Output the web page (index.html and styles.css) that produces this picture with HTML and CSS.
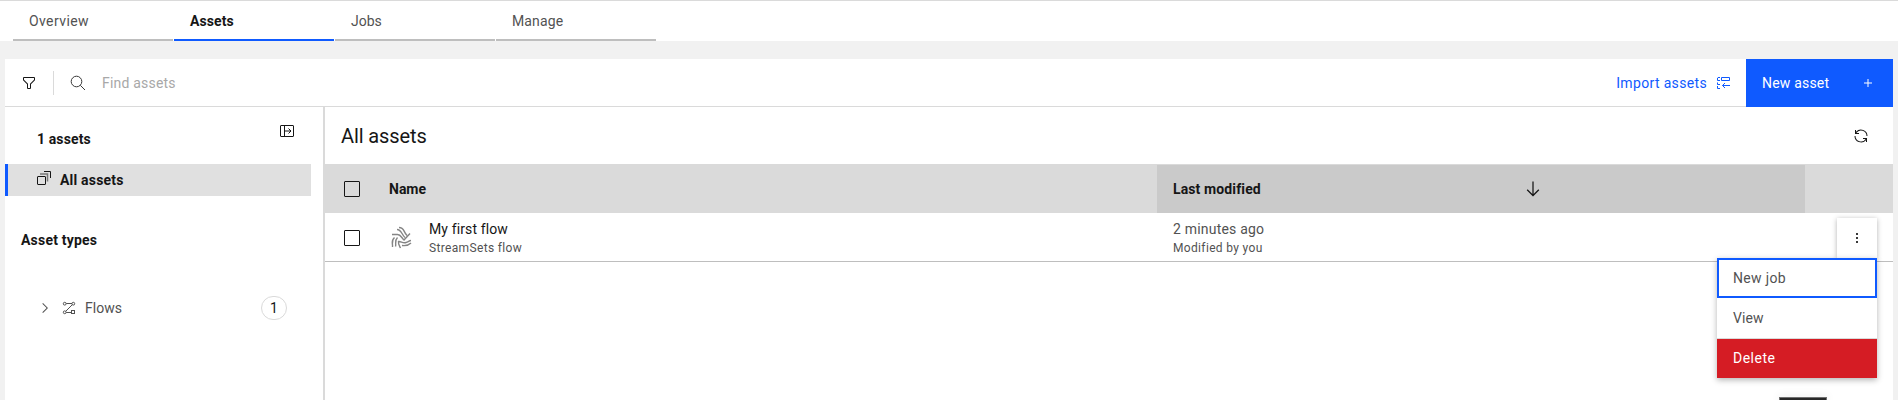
FILE: index.html
```html
<!DOCTYPE html>
<html lang="en">
<head>
<meta charset="utf-8">
<title>Assets</title>
<link rel="stylesheet" href="styles.css">
</head>
<body>
<nav class="tabs">
  <a class="tab ls-4">Overview</a>
  <a class="tab tab-active">Assets</a>
  <a class="tab">Jobs</a>
  <a class="tab ls-1">Manage</a>
</nav>
<main class="panel">
  <header class="toolbar">
    <div class="filter"><svg width="16" height="16" viewBox="0 0 32 32"><path d="M18 28h-4a2 2 0 0 1-2-2v-7.59L4.59 11A2 2 0 0 1 4 9.59V6a2 2 0 0 1 2-2h20a2 2 0 0 1 2 2v3.59a2 2 0 0 1-.59 1.41L20 18.41V26a2 2 0 0 1-2 2ZM6 6v3.59l8 8V26h4v-8.41l8-8V6Z"/></svg></div>
    <div class="search">
      <svg width="16" height="16" viewBox="0 0 16 16" fill="none" stroke="currentColor"><circle cx="6.500" cy="6.500" r="5.300"/><path d="M10.300 10.300L15 15"/></svg>
      <span class="placeholder ls-2">Find assets</span>
    </div>
    <div class="import"><span class="ls-3">Import assets</span>
      <svg width="16" height="16" viewBox="0 0 16 16" fill="none" stroke="currentColor"><path d="M5 2.500H3L2.500 3V5.500H5M6.500 2.500H14.500V5.500H6.500ZM2.500 7.500V9.500H5M5 13.500H2.500V11M15 10.500H7.500M10 8L7.500 10.500L10 13"/></svg>
    </div>
    <div class="new-asset"><span class="ls-2">New asset</span>
      <svg width="16" height="16" viewBox="0 0 32 32"><path d="M17 15V8h-2v7H8v2h7v7h2v-7h7v-2z"/></svg>
    </div>
  </header>
  <div class="body">
    <aside class="side">
      <div class="side-head"><span class="ls-1">1 assets</span>
        <svg class="open-icon" width="16" height="16" viewBox="0 0 16 16" fill="none" stroke="currentColor"><rect x="1.500" y="2.500" width="13" height="11" rx=".5"/><path d="M5.500 2.500V13.500M6 8H12M9.500 5.500L12 8L9.500 10.500"/></svg>
      </div>
      <div class="nav-item"><svg width="16" height="16" viewBox="0 0 16 16" fill="none" stroke="currentColor"><rect x="1.500" y="6.500" width="8" height="8" rx=".5"/><path stroke="#777" stroke-width="1.500" d="M4 4H11.500V11.500"/><path d="M8 1.500H14.500V8"/></svg><span class="ls-2">All assets</span></div>
      <div class="side-title ls-2">Asset types</div>
      <div class="type-row">
        <svg width="16" height="16" viewBox="0 0 32 32"><path d="M22 16L12 26 10.600 24.600 19.200 16 10.600 7.400 12 6z"/></svg>
        <svg class="flow-icon" width="16" height="16" viewBox="0 0 16 16" fill="none" stroke="currentColor"><circle cx="3.700" cy="3.700" r="1.400"/><circle cx="12.300" cy="3.700" r="1.400"/><circle cx="3.700" cy="12.300" r="1.400"/><rect x="10.500" y="10.500" width="3" height="3"/><path d="M5.200 3.500H11M11.300 4.700L4.700 11.300M5.200 12.500H10.500"/></svg>
        <span class="type-name">Flows</span>
        <span class="badge">1</span>
      </div>
    </aside>
    <section class="content">
      <div class="content-head"><h1>All assets</h1>
        <svg width="16" height="16" viewBox="0 0 32 32"><path d="M12 10H6.780A11 11 0 0 1 27 16h2A13 13 0 0 0 6 7.680V4H4v8h8zM20 22h5.220A11 11 0 0 1 5 16H3a13 13 0 0 0 23 8.320V28h2V20H20z"/></svg>
      </div>
      <div class="grid thead">
        <div class="check-cell"><span class="check"></span></div>
        <div class="head-cell">Name</div>
        <div class="head-cell sorted"><span class="ls-1">Last modified</span><svg width="20" height="20" viewBox="0 0 32 32"><path d="M24.590 16.590 17 24.170 17 4 15 4 15 24.170 7.410 16.590 6 18 16 28 26 18z"/></svg></div>
        <div></div>
      </div>
      <div class="grid row">
        <div class="check-cell"><span class="check"></span></div>
        <div class="name-cell">
          <svg width="24" height="24" viewBox="0 0 24 24" fill="none" stroke="#858585" stroke-width="1.400"><path d="M8 3.500C12.500 3.500 12.500 8.500 16 11.500M10 1.500C15.500 1.500 14 5.500 18 9.500M3 8.500H8.500C12 8.500 12.500 12 15 14L21 7.500M5.500 11.500C1.500 15 4 17.500 3.500 21M8.500 11.500C5 15 7.500 17.500 6.500 20.500M11.500 22C10 19 9 17.500 9.500 15.500C12 15 13.500 17.500 17 16.500C19.500 16 20 14.500 22 14.500M13 19.500C17 20 20 19 22 17"/></svg>
          <div><div class="primary dark ls-1">My first flow</div><div class="secondary ls-3">StreamSets flow</div></div>
        </div>
        <div class="date-cell"><div class="primary ls-2">2 minutes ago</div><div class="secondary ls-3">Modified by you</div></div>
        <div class="overflow"><svg width="16" height="16" viewBox="0 0 16 16"><path d="M7 3h2v2H7zM7 7h2v2H7zM7 11h2v2H7z"/></svg>
          <div class="menu">
            <div class="menu-item focused ls-3">New job</div>
            <div class="menu-item ls-1">View</div>
            <div class="menu-item danger ls-5">Delete</div>
          </div>
        </div>
      </div>
    </section>
  </div>
</main>
<div class="dock"></div>
</body>
</html>
```
FILE: styles.css
```css
* { box-sizing: border-box; }
body {
  margin: 0; height: 400px; overflow: hidden; position: relative;
  background: #f1f1f1; color: #161616;
  font: 14px/18px Roboto, "Liberation Sans", sans-serif;
}
svg { display: block; flex: none; fill: currentColor; }
svg[fill="none"] { fill: none; }
.ls-1 { letter-spacing: .12px; }
.ls-2 { letter-spacing: .2px; }
.ls-3 { letter-spacing: .34px; }
.ls-4 { letter-spacing: .4px; }
.ls-5 { letter-spacing: .5px; }

.tabs { height: 41px; display: flex; gap: 1px; padding-left: 13px; background: #fff; border-top: 1px solid #dadada; }
.tab { width: 160px; height: 40px; padding: 11px 15px 0 16px; border-bottom: 2px solid #bebebe; color: #525252; }
.tab-active { border-color: #0f5aff; color: #161616; font-weight: 700; letter-spacing: .1px; }

.panel { margin: 18px 5px 0; height: 341px; background: #fff; display: flex; flex-direction: column; }
.toolbar { height: 48px; display: flex; flex: none; border-bottom: 1px solid #dadada; }
.filter { width: 49px; display: flex; align-items: center; padding-left: 16px; position: relative; }
.filter::after { content: ""; position: absolute; right: 0; top: 12px; width: 1px; height: 24px; background: #dadada; }
.search { flex: 1; display: flex; align-items: center; gap: 16px; padding-left: 16px; color: #393939; }
.placeholder { color: #a8a8a8; }
.import { display: flex; align-items: center; gap: 8px; color: #0f5aff; padding-right: 15px; }
.new-asset { width: 147px; height: 48px; display: flex; align-items: center; justify-content: space-between; padding: 0 17px 0 16px; background: #0f5aff; color: #fff; }

.body { flex: 1; display: flex; min-height: 0; }
.side { width: 320px; border-right: 2px solid #dadada; flex: none; }
.side-head { height: 57px; display: flex; justify-content: space-between; padding: 23px 28px 0 32px; font-weight: 700; }
.open-icon { margin-top: -7px; }
.nav-item { width: 306px; height: 32px; display: flex; align-items: center; gap: 8px; padding: 0 0 0 28px; border-left: 3px solid #0f5aff; background: #e0e0e0; font-weight: 700; }
.nav-item svg { margin-top: -4px; }
.side-title { padding: 35px 16px 0; font-weight: 700; }
.type-row { display: flex; align-items: center; margin-top: 46px; padding-left: 32px; height: 26px; color: #525252; }
.flow-icon { margin-left: 8px; }
.type-name { margin-left: 8px; flex: 1; }
.badge { width: 26px; height: 24px; margin-right: 36px; border: 1px solid #dadada; border-radius: 12px; line-height: 22px; text-align: center; color: #161616; }

.content { flex: 1; }
.content-head { height: 57px; display: flex; align-items: center; justify-content: space-between; padding: 1px 24px 0 16px; }
h1 { margin: 0; font-size: 20px; line-height: 26px; font-weight: 400; letter-spacing: -.1px; }
.grid { display: grid; grid-template-columns: 48px 784px 648px 88px; height: 49px; }
.thead { background: #dadada; font-weight: 700; padding-top: 1px; }
.check-cell { display: flex; align-items: center; padding-left: 19px; }
.check { width: 16px; height: 16px; border: 1px solid #161616; border-radius: 1px; }
.head-cell { display: flex; align-items: center; padding-left: 16px; }
.sorted { background: #cacaca; justify-content: space-between; padding-right: 262px; }
.row { border-bottom: 1px solid #bebebe; color: #525252; }
.row .check-cell { padding-top: 1px; }
.name-cell { display: flex; align-items: center; gap: 16px; padding: 2px 0 0 16px; }
.date-cell { padding: 7px 0 0 16px; }
.primary { line-height: 19px; }
.dark { color: #161616; }
.secondary { font-size: 12px; line-height: 18px; }
.overflow { position: relative; width: 40px; height: 40px; margin: 5px 0 0 32px; display: flex; align-items: center; justify-content: center; background: #fff; box-shadow: 0 1px 5px rgba(0,0,0,.3); color: #393939; }
.menu { position: absolute; z-index: 2; right: 0; top: 40px; width: 160px; background: #fff; box-shadow: 0 2px 6px rgba(0,0,0,.3); color: #525252; }
.overflow::after { content: ""; position: absolute; z-index: 1; left: 0; right: 0; bottom: -4px; height: 4px; background: #fff; }
.menu-item { height: 40px; padding: 11px 16px; }
.focused { outline: 2px solid #0f5aff; outline-offset: -2px; }
.danger { border-top: 1px solid #dadada; padding-top: 10px; background: #d51c24; background-clip: padding-box; color: #fff; }
.dock { position: absolute; left: 1779px; top: 397px; width: 48px; height: 3px; background: #262626; border: 1px solid #6f6f6f; border-bottom: 0; box-shadow: 0 0 10px rgba(0,0,0,.15); }
```
